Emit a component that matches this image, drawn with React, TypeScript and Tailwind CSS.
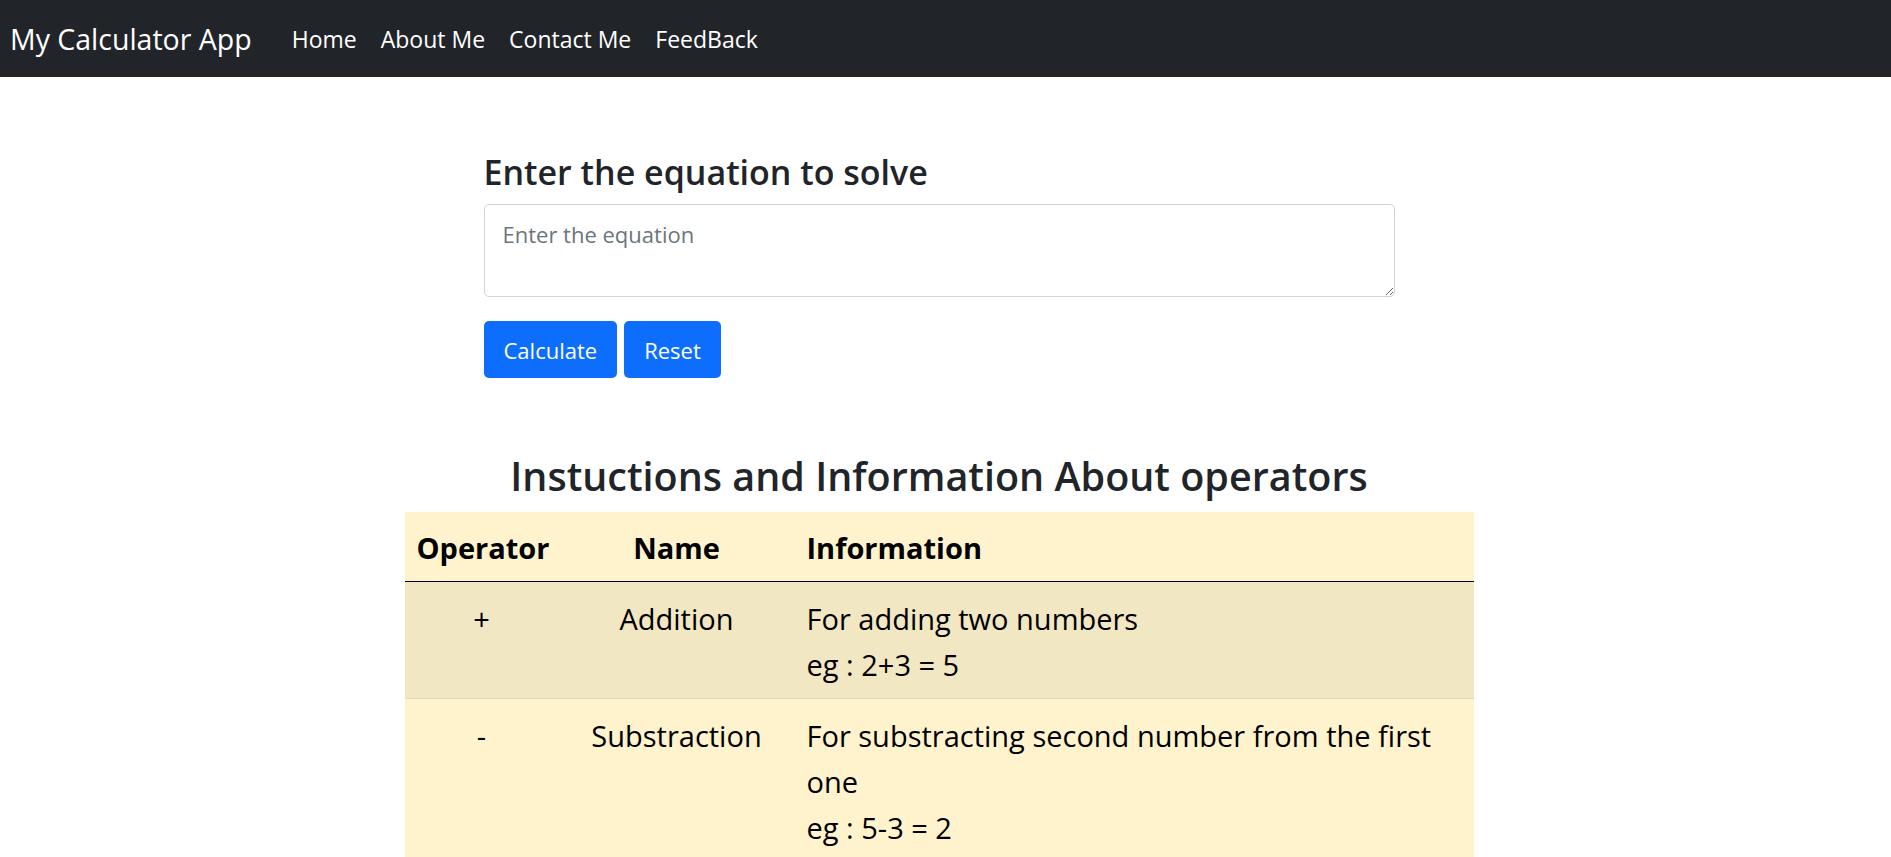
const operators = [
  { op: '+', name: 'Addition', info: ['For adding two numbers', 'eg : 2+3 = 5'] },
  {
    op: '-',
    name: 'Substraction',
    info: ['For substracting second number from the first', 'one', 'eg : 5-3 = 2'],
  },
  { op: '*', name: 'Multiplication', info: ['For multiplying two numbers', 'eg : 2*3 = 6'] },
  { op: '/', name: 'Division', info: ['For dividing first number by the second', 'eg : 6/3 = 2'] },
]

export default function App() {
  return (
    <div className="min-h-screen bg-white font-['Open_Sans',sans-serif] text-[#212529]">
      {/* Navbar */}
      <nav className="flex h-[77px] items-center bg-[#212529] pl-[10px]">
        <a className="mr-[28px] text-[28.5px] leading-[42px] text-white">My Calculator App</a>
        <ul className="flex items-center">
          {['Home', 'About Me', 'Contact Me', 'FeedBack'].map((l) => (
            <li key={l}>
              <a className="block px-[12px] text-[23px] leading-[34px] text-white">{l}</a>
            </li>
          ))}
        </ul>
      </nav>

      <div className="pr-[13px]">
        {/* Calculator form */}
        <div className="mx-auto w-[911px] pt-[75px]">
          <h4 className="text-[34px] font-semibold leading-[41px]">Enter the equation to solve</h4>
          <textarea
            className="mt-[11px] block h-[93px] w-full rounded-[5px] border border-[#ced4da] px-[18px] pt-[13px] text-[22px] leading-[33px] outline-none placeholder:text-[#6c757d]"
            placeholder="Enter the equation"
          />
          <div className="mt-[24px] flex gap-[7px]">
            <button className="h-[57px] rounded-[5px] bg-[#0d6efd] px-[20px] pt-[2px] text-[22px] text-white">
              Calculate
            </button>
            <button className="h-[57px] rounded-[5px] bg-[#0d6efd] px-[20px] pt-[2px] text-[22px] text-white">
              Reset
            </button>
          </div>
        </div>

        {/* Operators info */}
        <div className="mt-[74px] flex flex-col items-center">
          <h2 className="text-[39.5px] font-semibold leading-[48px]">
            Instuctions and Information About operators
          </h2>
          <table className="mt-[12px] w-[1069px] table-fixed border-collapse bg-[#fff3cd] text-[29px] text-black">
            <colgroup>
              <col className="w-[154px]" />
              <col className="w-[236px]" />
              <col />
            </colgroup>
            <thead>
              <tr className="border-b border-black leading-[47px]">
                <th className="px-[12px] pt-[12px] pb-[10px] text-center font-bold">Operator</th>
                <th className="px-[12px] pt-[12px] pb-[10px] text-center font-bold">Name</th>
                <th className="px-[12px] pt-[12px] pb-[10px] text-left font-bold">Information</th>
              </tr>
            </thead>
            <tbody className="leading-[46px]">
              {operators.map((row, i) => (
                <tr
                  key={row.op}
                  className={`border-b border-[#e6dbb9] ${i % 2 === 0 ? 'bg-[#f2e7c3]' : 'bg-[#fff3cd]'}`}
                >
                  <td className="px-[12px] pt-[14px] pb-[10px] text-center align-top">{row.op}</td>
                  <td className="px-[12px] pt-[14px] pb-[10px] text-center align-top whitespace-nowrap">
                    {row.name}
                  </td>
                  <td className="px-[12px] pt-[14px] pb-[10px] align-top">
                    {row.info.map((line) => (
                      <div key={line} className="whitespace-nowrap">
                        {line}
                      </div>
                    ))}
                  </td>
                </tr>
              ))}
            </tbody>
          </table>
        </div>
      </div>
    </div>
  )
}
